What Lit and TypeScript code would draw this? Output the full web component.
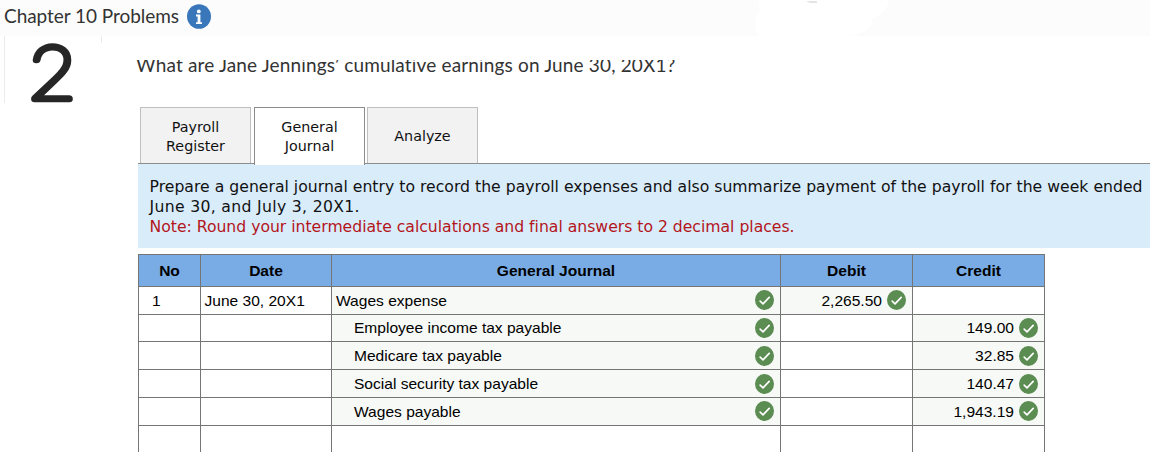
import { LitElement, html, css, svg, nothing } from "lit";
import { customElement } from "lit/decorators.js";
import { classMap } from "lit/directives/class-map.js";

interface Entry {
  no?: string;
  date?: string;
  account?: string;
  debit?: string;
  credit?: string;
  short?: boolean;
  raised?: boolean;
}

const entries: Entry[] = [
  { no: "1", date: "June 30, 20X1", account: "Wages expense", debit: "2,265.50", raised: true },
  { account: "Employee income tax payable", credit: "149.00", short: true },
  { account: "Medicare tax payable", credit: "32.85" },
  { account: "Social security tax payable", credit: "140.47" },
  { account: "Wages payable", credit: "1,943.19", raised: true },
  {},
];

const check = () => html`<svg class="check" viewBox="0 0 19 20">
  ${svg`<ellipse cx="9.5" cy="10" rx="9.5" ry="10" fill="#5b8c51"/>
  <path d="M5.2 11.2 L8 13.8 L14.2 7.4" fill="none" stroke="#fff" stroke-width="1.7" stroke-linecap="round" stroke-linejoin="round"/>`}
</svg>`;

@customElement("journal-table")
export class JournalTable extends LitElement {
  static styles = css`
    :host { display: block; width: 907px; font: 15.55px "Liberation Sans", Arial, sans-serif; color: #000; }
    .table { border-left: 1px solid #757575; border-top: 1px solid #757575; }
    .row { display: grid; grid-template-columns: 62px 131px 449px 132px 132px; height: 28px; }
    .head { height: 32px; font-weight: bold; }
    .short { height: 27px; }
    .cell { box-sizing: border-box; border-right: 1px solid #757575; border-bottom: 1px solid #757575; display: flex; align-items: center; padding: 0 6px 0 4px; white-space: nowrap; }
    .head .cell { justify-content: center; background: #79ace5; padding: 0; }
    .no { padding-left: 13px; }
    .date { padding-left: 3.5px; }
    .graded { background: #f7f9f6; }
    .short .graded { padding-bottom: 1px; }
    .account { justify-content: space-between; }
    .indent { padding-left: 22px; }
    .amount { justify-content: flex-end; gap: 5px; }
    .check { display: block; width: 19px; height: 20px; flex: none; }
    .raised .check { margin-bottom: 2px; }
  `;

  private amount(value?: string) {
    return html`<div class=${classMap({ cell: true, amount: true, graded: !!value })}>
      ${value ? html`<span>${value}</span>${check()}` : nothing}
    </div>`;
  }

  render() {
    return html`<div class="table">
      <div class="row head">
        ${["No", "Date", "General Journal", "Debit", "Credit"].map((t) => html`<div class="cell">${t}</div>`)}
      </div>
      ${entries.map((e) => html`<div class=${classMap({ row: true, short: !!e.short, raised: !!e.raised })}>
        <div class="cell no">${e.no ?? nothing}</div>
        <div class="cell date">${e.date ?? nothing}</div>
        <div class=${classMap({ cell: true, account: true, graded: !!e.account, indent: !e.debit })}>
          ${e.account ? html`<span>${e.account}</span>${check()}` : nothing}
        </div>
        ${this.amount(e.debit)}${this.amount(e.credit)}
      </div>`)}
    </div>`;
  }
}

@customElement("app-root")
export class AppRoot extends LitElement {
  static styles = css`
    :host { display: block; width: 1150px; height: 452px; overflow: hidden; background: #fff; }
    .header { position: relative; display: flex; height: 36px; background: #fcfcfc; align-items: flex-start; padding-left: 4px; box-sizing: border-box; }
    .title { font: 19px/22px Lato, sans-serif; color: #333; letter-spacing: -0.05px; margin-top: 5px; width: 183px; white-space: nowrap; }
    .info { width: 24px; height: 25px; margin-top: 4px; }
    .smudge { position: absolute; left: 740px; top: 0; width: 160px; height: 36px; }
    .question-row { display: flex; height: 71px; }
    .number { width: 97px; height: 67px; margin-left: 4px; border-left: 1px solid #ececec; flex: none; }
    .tick { width: 1px; height: 7px; background: #ececec; flex: none; margin-left: -1px; }
    .question { margin: 24px 0 0 34px; height: 22px; overflow: hidden; }
    .question-text { font: 19px/22px Lato, sans-serif; color: #333; letter-spacing: 0.16px; margin-top: -6px; white-space: nowrap; }
    .content { margin-left: 138px; }
    .tabs { display: flex; height: 57px; padding-left: 2px; box-sizing: border-box; border-bottom: 1px solid #8c8c8c; }
    .tab { box-sizing: border-box; width: 111px; height: 56px; margin-right: 3px; padding-top: 2px; border: 1px solid #bfbfbf; border-bottom: 0; background: #f2f2f2; font: 14.3px/19px "DejaVu Sans", Verdana, sans-serif; color: #111; display: flex; align-items: center; justify-content: center; text-align: center; }
    .tab + .tab + .tab { margin-left: -1px; }
    .active { height: 58px; background: #fff; border-color: #8c8c8c; position: relative; padding-bottom: 2px; }
    .note { height: 84px; box-sizing: border-box; background: #d9ecfa; padding: 13px 0 0 11.5px; font: 15.66px/20px "DejaVu Sans", Verdana, sans-serif; color: #111; white-space: nowrap; }
    .lead { letter-spacing: 0.01px; }
    .dates { letter-spacing: 0.32px; }
    .warning { color: #b3151b; letter-spacing: -0.015px; }
    .journal { margin-top: 6px; }
  `;

  render() {
    return html`
      <div class="header">
        <div class="title">Chapter 10 Problems</div>
        <svg class="info" viewBox="0 0 24 25">
          <ellipse cx="12" cy="12.5" rx="12" ry="12.3" fill="#3a76ba" />
          <circle cx="11.8" cy="7.4" r="1.9" fill="#fff" />
          <path d="M9 10.6H13.4V18.2H15V20H9V18.2H10.6V12.4H9Z" fill="#fff" />
        </svg>
        <svg class="smudge" viewBox="0 0 160 36">
          <path d="M19 0H149Q148 9 139 15L132 18Q132 31 117 34L106 36H22Q16 33 16 28V18Q17 14 20 12Z" fill="#fff" />
          <path d="M66 1H77V3H70Z" fill="#e4e4e4" />
        </svg>
      </div>
      <div class="question-row">
        <svg class="number" viewBox="0 0 97 67">
          <text transform="translate(24.2 62.6) scale(1.08 1)" font-family="Lato" font-weight="100" font-size="73.5" fill="#262626" stroke="#262626" stroke-width="6.4" stroke-linejoin="round">2</text>
        </svg>
        <div class="tick"></div>
        <div class="question"><div class="question-text">What are Jane Jennings’ cumulative earnings on June 30, 20X1?</div></div>
      </div>
      <div class="content">
        <div class="tabs">
          <div class="tab">Payroll<br />Register</div>
          <div class="tab active">General<br />Journal</div>
          <div class="tab">Analyze</div>
        </div>
        <div class="note">
          <div class="lead">Prepare a general journal entry to record the payroll expenses and also summarize payment of the payroll for the week ended</div>
          <div class="dates">June 30, and July 3, 20X1.</div>
          <div class="warning">Note: Round your intermediate calculations and final answers to 2 decimal places.</div>
        </div>
        <journal-table class="journal"></journal-table>
      </div>
    `;
  }
}
